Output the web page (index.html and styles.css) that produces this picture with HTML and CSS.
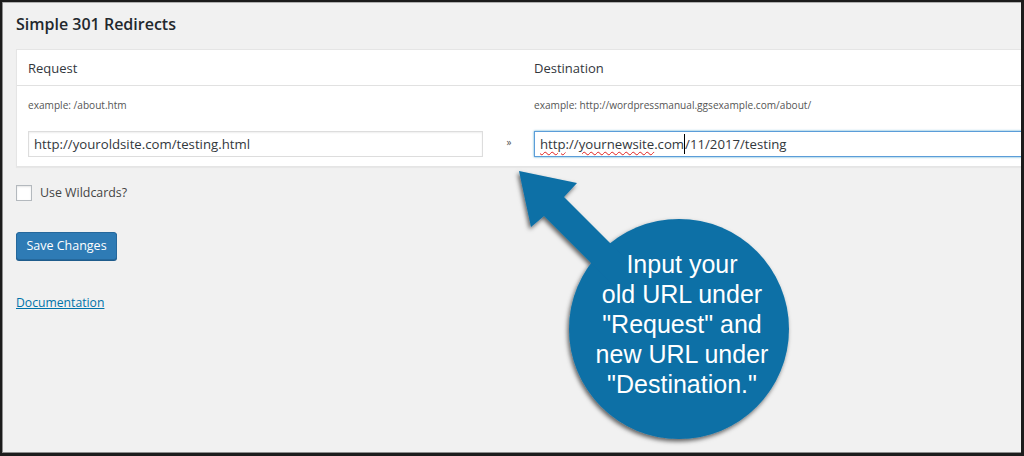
FILE: index.html
```html
<!DOCTYPE html>
<html>
<head>
<meta charset="utf-8">
<link rel="stylesheet" href="styles.css">
</head>
<body>
<div class="frame">
  <div class="wrap">
    <h1 class="title">Simple 301 Redirects</h1>
    <div class="table">
      <div class="row head">
        <div class="cell">Request</div>
        <div class="cell"></div>
        <div class="cell">Destination</div>
      </div>
      <div class="row examples">
        <div class="cell">example: /about.htm</div>
        <div class="cell"></div>
        <div class="cell">example: http://wordpressmanual.ggsexample.com/about/</div>
      </div>
      <div class="row inputs">
        <div class="cell"><div class="field">http://youroldsite.com/testing.html</div></div>
        <div class="cell sep">&raquo;</div>
        <div class="cell"><div class="field focus"><span class="typo">http</span>://<span class="typo">yournewsite</span>.com<span class="caret"></span>/11/2017/testing</div></div>
      </div>
    </div>
    <label class="check"><span class="box"></span>Use Wildcards?</label>
    <div class="btn">Save Changes</div>
    <a class="doc" href="#">Documentation</a>
  </div>

  <svg class="callout-shape" width="1024" height="456" viewBox="0 0 1024 456">
    <defs>
      <filter id="sh" x="-20%" y="-20%" width="140%" height="140%">
        <feDropShadow dx="-1.5" dy="2.5" stdDeviation="2" flood-color="#000" flood-opacity="0.6"/>
      </filter>
    </defs>
    <g filter="url(#sh)" fill="#0a6fa6">
      <circle cx="679" cy="329" r="110"/>
      <polygon points="519,171 577,183 564,197 664,297 644,316 544,216 531,227"/>
    </g>
  </svg>
  <div class="callout-text">Input your<br>old URL under<br>"Request" and<br>new URL under<br>"Destination."</div>
</div>
</body>
</html>
```
FILE: styles.css
```css
html, body {
  margin: 0;
  padding: 0;
  background: #1b1b1b;
}
.frame {
  position: relative;
  width: 1024px;
  height: 456px;
  box-sizing: border-box;
  border-style: solid;
  border-color: #1c1c1c;
  border-width: 2px 3px 3px 2px;
  background: #f1f1f1;
  overflow: hidden;
  box-shadow: inset 1px 0 0 #8e8e8e, inset 0 -1px 0 #8e8e8e, inset 0 1px 0 #b0b0b0;
  font-family: "Open Sans", "Noto Sans", sans-serif;
  color: #444;
}
.wrap {
  padding-left: 14px;
}
.title {
  margin: 0 0 14px;
  padding-top: 11px;
  font-size: 16px;
  line-height: 22px;
  font-weight: 600;
  color: #23282d;
}
.table {
  width: 1100px;
  background: #fff;
  border: 1px solid #e5e5e5;
  box-shadow: 0 1px 1px rgba(0,0,0,.04);
}
.row {
  display: grid;
  grid-template-columns: 478px 28px 1fr;
}
.cell {
  padding: 0 12px 0 11px;
}
.row .cell:nth-child(2) {
  padding: 0;
}
.row.head {
  border-bottom: 1px solid #e1e1e1;
  padding: 8px 0 7px;
  font-size: 13px;
  line-height: 20px;
  color: #32373c;
}
.row.examples {
  padding-top: 11px;
  font-size: 10.1px;
  line-height: 16px;
  color: #555;
}
.row.inputs {
  padding: 18px 0 9px;
}
.field {
  box-sizing: border-box;
  height: 26px;
  border: 1px solid #ddd;
  box-shadow: inset 0 1px 2px rgba(0,0,0,.07);
  padding: 0 5px;
  font-size: 13.2px;
  line-height: 24px;
  color: #32373c;
  white-space: nowrap;
  overflow: hidden;
}
.field.focus {
  border-color: #5b9dd9;
  box-shadow: 0 0 2px rgba(30,140,190,.8);
}
.typo {
  text-decoration: underline wavy #e02020;
  text-decoration-thickness: 1px;
  text-underline-offset: 2px;
}
.caret {
  display: inline-block;
  width: 0;
  height: 20px;
  border-left: 1px solid #000;
  vertical-align: -5px;
}
.sep {
  text-align: center;
  font-size: 10px;
  line-height: 22px;
  color: #555;
}
.check {
  display: flex;
  align-items: center;
  margin-top: 18px;
  font-size: 12.4px;
  line-height: 16px;
  color: #444;
}
.box {
  width: 16px;
  height: 16px;
  box-sizing: border-box;
  border: 1px solid #b4b9be;
  background: #fff;
  box-shadow: inset 0 1px 2px rgba(0,0,0,.1);
  margin-right: 8px;
}
.btn {
  margin-top: 31px;
  box-sizing: border-box;
  width: 101px;
  height: 28px;
  border: 1px solid #25689c;
  border-radius: 3px;
  background: #2e7bb5;
  box-shadow: 0 1px 0 #1f5c8c;
  color: #fff;
  font-size: 12.5px;
  line-height: 26px;
  text-align: center;
}
.doc {
  display: inline-block;
  margin-top: 34px;
  font-size: 12.2px;
  line-height: 18px;
  color: #0073aa;
  text-decoration: underline;
}
.callout-shape {
  position: absolute;
  left: -2px;
  top: -2px;
  pointer-events: none;
}
.callout-text {
  position: absolute;
  left: 580px;
  top: 247px;
  width: 200px;
  text-align: center;
  font-family: "Liberation Sans", Arial, sans-serif;
  font-size: 25px;
  line-height: 30px;
  color: #fff;
}
```
